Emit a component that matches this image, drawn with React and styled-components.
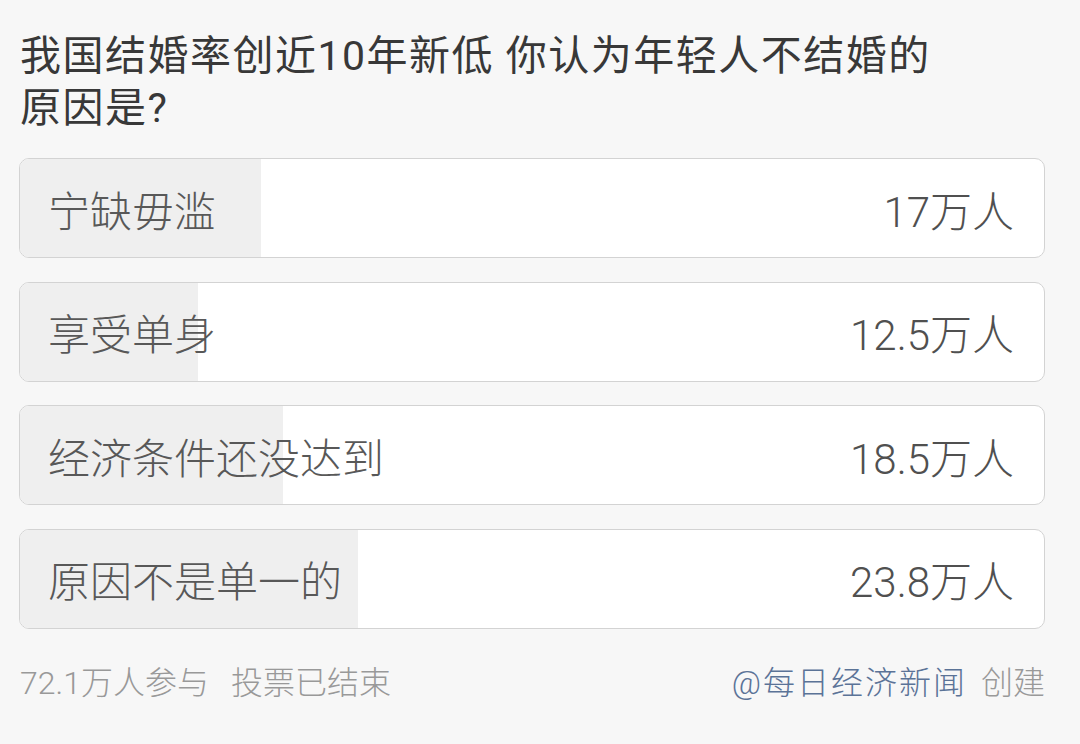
import React from 'react';
import styled, { createGlobalStyle } from 'styled-components';

const GlobalStyle = createGlobalStyle`
  html, body {
    margin: 0;
    padding: 0;
    background: #f7f7f7;
  }
  body {
    font-family: Roboto, "Noto Sans CJK SC", sans-serif;
    font-weight: 300;
  }
`;

const options = [
  { label: '宁缺毋滥', count: '17万人', value: 17 },
  { label: '享受单身', count: '12.5万人', value: 12.5 },
  { label: '经济条件还没达到', count: '18.5万人', value: 18.5 },
  { label: '原因不是单一的', count: '23.8万人', value: 23.8 },
];
const total = 72.1;

export default function App() {
  return (
    <Page>
      <GlobalStyle />
      <Title>
        我国结婚率创近10年新低 你认为年轻人不结婚的
        <br />
        原因是?
      </Title>
      <OptionList>
        {options.map((o) => (
          <Option key={o.label}>
            <Fill style={{ width: `${(o.value / total) * 100}%` }} />
            <Label>{o.label}</Label>
            <Count>{o.count}</Count>
          </Option>
        ))}
      </OptionList>
      <Footer>
        <Stats>
          <span>72.1万人参与</span>
          <span>投票已结束</span>
        </Stats>
        <Creator>
          <Author>@每日经济新闻</Author>
          <span>创建</span>
        </Creator>
      </Footer>
    </Page>
  );
}

const Page = styled.div`
  width: 1026px;
  padding: 30px 35px 0 19px;
  height: 744px;
  box-sizing: content-box;
`;

const Title = styled.div`
  font-size: 41px;
  line-height: 52px;
  letter-spacing: 1.5px;
  color: #383838;
  font-weight: 400;
  padding-left: 1px;
  margin-bottom: 24px;
  white-space: nowrap;
`;

const OptionList = styled.div`
  display: flex;
  flex-direction: column;
  gap: 23.5px;
`;

const Option = styled.div`
  position: relative;
  height: 100px;
  box-sizing: border-box;
  border: 1px solid #d3d3d3;
  border-radius: 10px;
  background: #fff;
  overflow: hidden;
  display: flex;
  align-items: center;
  justify-content: space-between;
  padding: 0 30px 0 28px;
`;

const Fill = styled.div`
  position: absolute;
  left: 0;
  top: 0;
  bottom: 0;
  background: #efefef;
`;

const Label = styled.span`
  position: relative;
  font-size: 42px;
  color: #585858;
`;

const Count = styled.span`
  position: relative;
  font-size: 42px;
  color: #505050;
`;

const Footer = styled.div`
  display: flex;
  justify-content: space-between;
  align-items: center;
  margin-top: 34px;
  font-size: 32px;
  line-height: 40px;
  color: #999;
`;

const Stats = styled.div`
  display: flex;
  gap: 22px;
  padding-left: 1px;
`;

const Creator = styled.div`
  display: flex;
  gap: 14px;
`;

const Author = styled.span`
  color: #5b7397;
  letter-spacing: 2px;
`;
